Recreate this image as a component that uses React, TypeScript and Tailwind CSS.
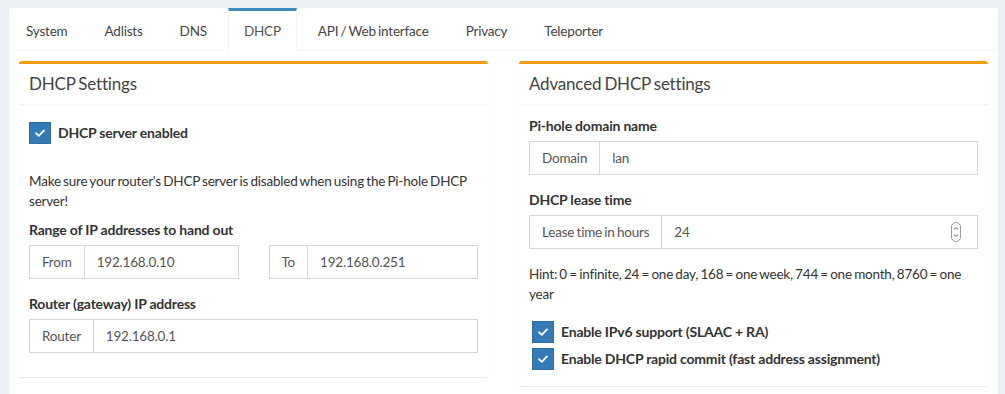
import React from 'react';

const tabs = ['System', 'Adlists', 'DNS', 'DHCP', 'API / Web interface', 'Privacy', 'Teleporter'];

function CheckBox({ label, className = '' }: { label: string; className?: string }) {
  return (
    <div className={`flex items-center ${className}`}>
      <span className="flex h-[22px] w-[22px] items-center justify-center border border-[#2e6da4] bg-[#337ab7]">
        <svg width="12" height="10" viewBox="0 0 12 10" fill="none">
          <path d="M2 5.2 L4.8 7.8 L10 2.4" stroke="white" strokeWidth="1.8" strokeLinecap="round" strokeLinejoin="round" />
        </svg>
      </span>
      <span className="ml-[7px] text-[14px] font-bold tracking-[-0.2px] text-[#333] [word-spacing:0px]">{label}</span>
    </div>
  );
}

function InputGroup({ addon, value, spinner = false }: { addon: string; value: string; spinner?: boolean }) {
  return (
    <div className="flex h-[34px] w-full text-[#555]">
      <span className="flex items-center border border-[#d2d6de] bg-white px-[12px]">{addon}</span>
      <div className="flex flex-1 items-center justify-between border border-l-0 border-[#d2d6de] bg-white pl-[12px] pr-[16px]">
        <span>{value}</span>
        {spinner && (
          <svg width="10" height="20" viewBox="0 0 10 20" fill="none">
            <rect x="0.5" y="0.5" width="9" height="19" rx="4.5" stroke="#9a9a9a" />
            <path d="M3 7.5 L5 5.5 L7 7.5" stroke="#555" strokeWidth="1" />
            <path d="M3 12.5 L5 14.5 L7 12.5" stroke="#555" strokeWidth="1" />
          </svg>
        )}
      </div>
    </div>
  );
}

function Box({ title, children }: { title: string; children: React.ReactNode }) {
  return (
    <div className="rounded-[3px] border-t-[3px] border-[#f39c12] bg-white shadow-[0_1px_1px_rgba(0,0,0,0.1)]">
      <div className="border-b border-[#f4f4f4] p-[10px]">
        <h3 className="text-[17px] leading-[20px] tracking-[-0.2px] text-[#444]">{title}</h3>
      </div>
      <div className="p-[10px]">{children}</div>
    </div>
  );
}

const labelClass = 'mb-[5px] block text-[14px] font-bold tracking-[-0.2px] [word-spacing:0px]';

export default function App() {
  return (
    <div
      className="min-h-[394px] bg-[#ecf0f5] pl-[9px] pr-[7px] pt-[8px] text-[13.5px] leading-[20px] tracking-[-0.2px] text-[#333] [word-spacing:-1px]"
      style={{ fontFamily: 'Lato, "Open Sans", sans-serif' }}
    >
      <div className="rounded-[3px] bg-white shadow-[0_1px_1px_rgba(0,0,0,0.1)]">
        {/* Tabs */}
        <ul className="flex border-b border-[#f4f4f4] pl-[1px]">
          {tabs.map((tab) => (
            <li
              key={tab}
              className={`-mb-px mr-[5px] border-t-[3px] px-[15px] py-[10px] ${
                tab === 'DHCP'
                  ? 'border-x border-x-[#f4f4f4] border-t-[#3c8dbc] bg-white text-[#555]'
                  : 'border-x border-x-transparent border-t-transparent text-[#444]'
              }`}
            >
              {tab}
            </li>
          ))}
        </ul>

        <div className="grid grid-cols-2 items-start gap-[31px] p-[10px] pb-[40px]">
          {/* DHCP Settings */}
          <Box title="DHCP Settings">
            <CheckBox label="DHCP server enabled" className="mt-[7px]" />
            <p className="mt-[27px] mb-[9px]">
              Make sure your router's DHCP server is disabled when using the Pi-hole DHCP server!
            </p>
            <label className={labelClass}>Range of IP addresses to hand out</label>
            <div className="grid grid-cols-2 gap-[30px]">
              <InputGroup addon="From" value="192.168.0.10" />
              <InputGroup addon="To" value="192.168.0.251" />
            </div>
            <label className={`mt-[15px] ${labelClass}`}>Router (gateway) IP address</label>
            <InputGroup addon="Router" value="192.168.0.1" />
            <div className="h-[14px]" />
          </Box>

          {/* Advanced DHCP settings */}
          <Box title="Advanced DHCP settings">
            <label className={`mt-[1px] ${labelClass}`}>Pi-hole domain name</label>
            <InputGroup addon="Domain" value="lan" />
            <label className={`mt-[15px] ${labelClass}`}>DHCP lease time</label>
            <InputGroup addon="Lease time in hours" value="24" spinner />
            <p className="mt-[15px]">
              Hint: 0 = infinite, 24 = one day, 168 = one week, 744 = one month, 8760 = one year
            </p>
            <div className="ml-[3px] mt-[17px] flex flex-col gap-[5px]">
              <CheckBox label="Enable IPv6 support (SLAAC + RA)" />
              <CheckBox label="Enable DHCP rapid commit (fast address assignment)" />
            </div>
            <div className="h-[6px]" />
          </Box>
        </div>
      </div>
    </div>
  );
}
